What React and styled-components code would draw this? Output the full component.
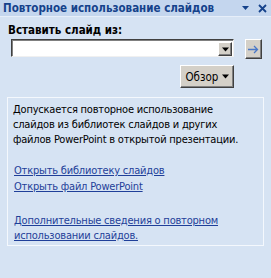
import React from "react";
import styled, { createGlobalStyle } from "styled-components";

const FONT = `"DejaVu Sans Condensed", "DejaVu Sans", Tahoma, sans-serif`;

const Global = createGlobalStyle`
  html, body { margin: 0; padding: 0; background: #d6e3f3; }
  body { font-family: ${FONT}; }
`;

const Pane = styled.div`
  width: 271px;
  height: 278px;
  background: #d6e3f3;
  overflow: hidden;
`;

const TitleBar = styled.div`
  height: 16px;
  display: flex;
  align-items: center;
  justify-content: space-between;
  padding: 0 4px 0 3px;
  background: #c4d6ee;
  border-bottom: 1px solid #e6eef9;
`;

const Title = styled.div`
  font-family: ${FONT};
  font-weight: bold;
  font-size: 11.5px;
  color: #15428b;
  white-space: nowrap;
`;

const TitleTools = styled.div`
  display: flex;
  align-items: center;
  gap: 9px;
`;

const Body = styled.div`
  padding: 5px 0 0 8px;
`;

const Label = styled.div`
  font-family: ${FONT};
  font-weight: bold;
  font-size: 11.5px;
  color: #000;
  height: 17px;
  line-height: 17px;
`;

const ComboRow = styled.div`
  display: flex;
  align-items: flex-start;
  padding-left: 3px;
`;

const Combo = styled.div`
  width: 223px;
  height: 18px;
  box-sizing: border-box;
  background: #fff;
  border: 1px solid;
  border-color: #404040 #f0f0f0 #f0f0f0 #404040;
  box-shadow: inset 1px 1px 0 #808080;
  display: flex;
  justify-content: flex-end;
  padding: 2px 1px 1px 0;
`;

const ClassicButton = styled.div`
  box-sizing: border-box;
  background: #d4d0c8;
  border: 1px solid;
  border-color: #ffffff #404040 #404040 #ffffff;
  box-shadow: inset -1px -1px 0 #808080;
  display: flex;
  align-items: center;
  justify-content: center;
  font-family: ${FONT};
  font-size: 11.5px;
  color: #000;
  width: ${(p) => p.$w}px;
  height: ${(p) => p.$h}px;
`;

const ArrowButton = styled(ClassicButton)`
  margin-left: 11px;
`;

const BrowseRow = styled.div`
  display: flex;
  justify-content: flex-end;
  width: 226px;
  margin-top: 6px;
`;

const Panel = styled.div`
  margin: 9px 0 0 7px;
  width: 257px;
  height: 149px;
  box-sizing: border-box;
  border: 1px solid #f4f8fd;
  padding: 4px 0 0 5px;
  font-family: ${FONT};
  font-size: 11px;
  letter-spacing: -0.2px;
  line-height: 15px;
  color: #000;
`;

const Para = styled.p`
  margin: 0;
`;

const LinkList = styled.div`
  display: flex;
  flex-direction: column;
  margin-top: ${(p) => p.$top}px;
  padding-left: 1px;
`;

const Link = styled.a`
  color: #1f3f99;
  text-decoration: underline;
  line-height: 15px;
  margin-bottom: 1px;
`;

const Caret = ({ size = 7 }) => (
  <svg width={size} height={Math.ceil(size / 2) + 1} viewBox="0 0 7 4">
    <path d="M0 0h7L3.5 4z" fill="#000" />
  </svg>
);

export default function App() {
  return (
    <Pane>
      <Global />
      <TitleBar>
        <Title>Повторное использование слайдов</Title>
        <TitleTools>
          <svg width="7" height="4" viewBox="0 0 7 4">
            <path d="M0 0h7L3.5 4z" fill="#15428b" />
          </svg>
          <svg width="9" height="9" viewBox="0 0 9 9">
            <path d="M1 1l7 7M8 1l-7 7" stroke="#15428b" strokeWidth="1.8" />
          </svg>
        </TitleTools>
      </TitleBar>
      <Body>
        <Label>Вставить слайд из:</Label>
        <ComboRow>
          <Combo>
            <ClassicButton $w={14} $h={14}>
              <Caret />
            </ClassicButton>
          </Combo>
          <ArrowButton $w={17} $h={20}>
            <svg width="11" height="9" viewBox="0 0 11 9">
              <path d="M0 4.5h9.5M6 1l3.5 3.5L6 8" stroke="#4a78c8" strokeWidth="1.3" fill="none" />
            </svg>
          </ArrowButton>
        </ComboRow>
        <BrowseRow>
          <ClassicButton $w={54} $h={23}>
            Обзор&nbsp;
            <Caret />
          </ClassicButton>
        </BrowseRow>
      </Body>
      <Panel>
        <Para>
          Допускается повторное использование
          <br />
          слайдов из библиотек слайдов и других
          <br />
          файлов PowerPoint в открытой презентации.
        </Para>
        <LinkList $top={16}>
          <Link href="#">Открыть библиотеку слайдов</Link>
          <Link href="#">Открыть файл PowerPoint</Link>
        </LinkList>
        <LinkList $top={18}>
          <Link href="#">
            Дополнительные сведения о повторном
            <br />
            использовании слайдов.
          </Link>
        </LinkList>
      </Panel>
    </Pane>
  );
}
